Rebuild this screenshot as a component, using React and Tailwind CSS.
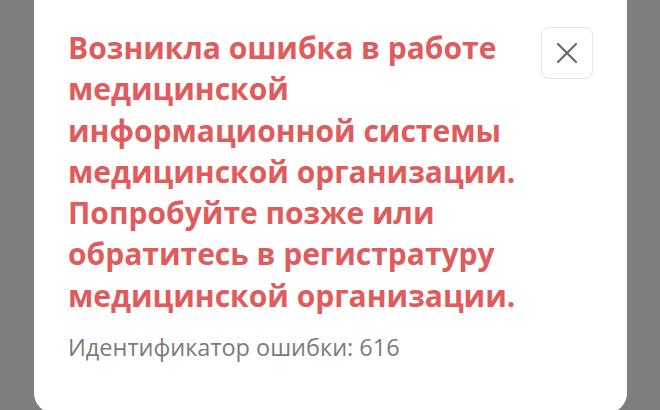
import React from 'react';

const TITLE_LINES = [
  'Возникла ошибка в работе',
  'медицинской',
  'информационной системы',
  'медицинской организации.',
  'Попробуйте позже или',
  'обратитесь в регистратуру',
  'медицинской организации.',
];

export default function App() {
  return (
    <div className="w-[660px] h-[410px] overflow-hidden bg-[#7f7f7f]" style={{ fontFamily: '"Open Sans", sans-serif' }}>
      <div className="ml-[34px] mt-[-20px] w-[593px] h-[433px] bg-white rounded-[20px] flex justify-between pl-[34px] pr-[34px] pt-[47px]">
        <div className="flex flex-col">
          <h1 className="text-[30px] font-bold leading-[41.3px] text-[#e05b5b]">
            {TITLE_LINES.map((l, i) => (
              <span key={i} className="block whitespace-nowrap">{l}</span>
            ))}
          </h1>
          <p className="mt-[16px] text-[23.5px] leading-[30px] text-[#7b7b7b] whitespace-nowrap">Идентификатор ошибки: 616</p>
        </div>
        <button className="w-[52px] h-[52px] shrink-0 rounded-[8px] border border-[#e3e3e3] flex items-center justify-center">
          <svg width="22" height="22" viewBox="0 0 22 22" fill="none" stroke="#666b70" strokeWidth="2.2" strokeLinecap="round">
            <path d="M2 2L20 20M20 2L2 20" />
          </svg>
        </button>
      </div>
    </div>
  );
}
